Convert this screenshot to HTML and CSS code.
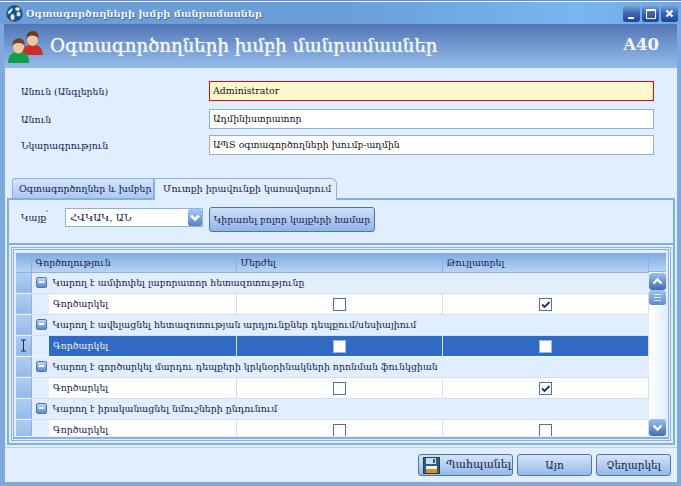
FILE: index.html
```html
<!DOCTYPE html>
<html lang="hy">

<head>
    <meta charset="UTF-8">
    <title>Օգտագործողների խմբի մանրամասներ</title>
    <link rel="stylesheet" href="styles.css">
</head>

<body>
    <div class="window">
        <div class="titlebar">
            <svg class="logo" width="17" height="17" viewBox="0 0 17 17">
                <circle cx="8.5" cy="8.5" r="8.2" fill="#1c4f8c"/>
                <path d="M1.5 8 C3 5 5 4 6.5 3 C7 5 5 8 3 9 Z" fill="#dff0fb"/>
                <ellipse cx="11.5" cy="4" rx="2.4" ry="1.7" fill="#f2f8fd"/>
                <ellipse cx="12.5" cy="9" rx="2" ry="2.6" fill="#cfe6f7"/>
                <ellipse cx="6.5" cy="12" rx="2" ry="3" fill="#f2f8fd"/>
            </svg>
            <span class="title-text">Օգտագործողների խմբի մանրամասներ</span>
            <div class="win-btns">
                <div class="win-btn"><svg width="17" height="17" viewBox="0 0 17 17"><rect x="5" y="12" width="6" height="2" fill="#fff"/></svg></div>
                <div class="win-btn"><svg width="17" height="17" viewBox="0 0 17 17"><path d="M4.5 4.5h9v9h-9z M4.5 5.5h9" fill="none" stroke="#fff"/></svg></div>
                <div class="win-btn"><svg width="17" height="17" viewBox="0 0 17 17"><path d="M5.5 5.5l6 6M11.5 5.5l-6 6" stroke="#fff" stroke-width="2.2"/></svg></div>
            </div>
        </div>

        <div class="header">
            <svg class="users" width="36" height="34" viewBox="0 0 36 34">
                <path d="M14 25 C14 17 18 15 24 15 C31 15 34 17 35 25 Z" fill="#c9302a"/>
                <ellipse cx="24.5" cy="9.5" rx="5.5" ry="6.5" fill="#f4c5a0"/>
                <path d="M18.5 9 C18 3 22 1 25 1 C29 1 31 4 30.5 9 C29 6 27 5.5 24 5.5 C21 5.5 20 7 18.5 9 Z" fill="#6b3a22"/>
                <path d="M0 33 C0 25 4 22 11 22 C18 22 21 25 21 33 Z" fill="#10a04a"/>
                <ellipse cx="10.5" cy="17" rx="5.5" ry="6.5" fill="#f4c5a0"/>
                <path d="M4.5 16 C4 10 8 8.500 11 8.500 C15 8.500 17 11 16.500 16 C15 13 13 13 10 13 C7 13 6 14 4.500 16 Z" fill="#6b4526"/>
            </svg>
            <span class="header-text">Օգտագործողների խմբի մանրամասներ</span>
            <span class="header-code">A40</span>
        </div>

        <div class="content">
            <div class="form">
                <div class="form-row">
                    <span class="form-label">Անուն (Անգլերեն)</span>
                    <div class="field field-required">Administrator</div>
                </div>
                <div class="form-row row-second">
                    <span class="form-label">Անուն</span>
                    <div class="field">Ադմինիստրատոր</div>
                </div>
                <div class="form-row row-third">
                    <span class="form-label">Նկարագրություն</span>
                    <div class="field">ԱՊՏ օգտագործողների խումբ-ադմին</div>
                </div>
            </div>

            <div class="tabs">
                <div class="tab">Օգտագործողներ և խմբեր</div>
                <div class="tab tab-active">Մուտքի իրավունքի կառավարում</div>
            </div>

            <div class="panel">
                <div class="toolbar">
                    <span class="site-label">Կայք<sup>՛</sup></span>
                    <div class="combo">
                        <span>ՀՎԿԱԿ, ԱՆ</span>
                        <div class="combo-btn"><svg width="14" height="17" viewBox="0 0 14 17"><path d="M3 6.500l4 4 4-4" fill="none" stroke="#fff" stroke-width="2.600"/></svg></div>
                    </div>
                    <div class="apply-btn">Կիրառել բոլոր կայքերի համար</div>
                </div>

                <div class="grid-area">
                    <div class="frame-outer">
                        <div class="frame-inner">
                            <div class="grid">
                                <table class="rights">
                                    <colgroup>
                                        <col class="col-head">
                                        <col class="col-indent">
                                        <col class="col-action">
                                        <col class="col-deny">
                                        <col class="col-allow">
                                    </colgroup>
                                    <tr class="head-row">
                                        <td class="row-head"></td>
                                        <td colspan="2">Գործողություն</td>
                                        <td>Մերժել</td>
                                        <td>Թույլատրել</td>
                                    </tr>
                                    <tr class="group-row">
                                        <td class="row-head"></td>
                                        <td colspan="4"><span class="collapse"></span>Կարող է ամփոփել լաբորատոր հետազոտությունը</td>
                                    </tr>
                                    <tr class="data-row">
                                        <td class="row-head"></td>
                                        <td class="indent"></td>
                                        <td>Գործարկել</td>
                                        <td class="check-cell"><span class="check"></span></td>
                                        <td class="check-cell"><span class="check"><svg width="11" height="11" viewBox="0 0 11 11"><path d="M2 5.500l2.500 2.500 5-5" fill="none" stroke="#1c2f6b" stroke-width="1.800"/></svg></span></td>
                                    </tr>
                                    <tr class="group-row">
                                        <td class="row-head"></td>
                                        <td colspan="4"><span class="collapse"></span>Կարող է ավելացնել հետազոտության արդյունքներ դեպքում/սեսիայիում</td>
                                    </tr>
                                    <tr class="data-row selected">
                                        <td class="row-head"><svg width="9" height="13" viewBox="0 0 9 13"><path d="M2 1h5M2 12h5M4.500 1v11" fill="none" stroke="#1c2f6b"/></svg></td>
                                        <td class="indent"></td>
                                        <td>Գործարկել</td>
                                        <td class="check-cell"><span class="check"></span></td>
                                        <td class="check-cell"><span class="check"></span></td>
                                    </tr>
                                    <tr class="group-row">
                                        <td class="row-head"></td>
                                        <td colspan="4"><span class="collapse"></span>Կարող է գործարկել մարդու դեպքերի կրկնօրինակների որոնման ֆունկցիան</td>
                                    </tr>
                                    <tr class="data-row">
                                        <td class="row-head"></td>
                                        <td class="indent"></td>
                                        <td>Գործարկել</td>
                                        <td class="check-cell"><span class="check"></span></td>
                                        <td class="check-cell"><span class="check"><svg width="11" height="11" viewBox="0 0 11 11"><path d="M2 5.500l2.500 2.500 5-5" fill="none" stroke="#1c2f6b" stroke-width="1.800"/></svg></span></td>
                                    </tr>
                                    <tr class="group-row">
                                        <td class="row-head"></td>
                                        <td colspan="4"><span class="collapse"></span>Կարող է իրականացնել նմուշների ընդունում</td>
                                    </tr>
                                    <tr class="data-row">
                                        <td class="row-head"></td>
                                        <td class="indent"></td>
                                        <td>Գործարկել</td>
                                        <td class="check-cell"><span class="check"></span></td>
                                        <td class="check-cell"><span class="check"></span></td>
                                    </tr>
                                </table>

                                <div class="scrollbar">
                                    <div class="scroll-head"></div>
                                    <div class="scroll-track">
                                        <div class="scroll-btn"><svg width="17" height="17" viewBox="0 0 17 17"><path d="M4.500 10.500l4-4 4 4" fill="none" stroke="#fff" stroke-width="2.400"/></svg></div>
                                        <div class="scroll-thumb"><svg width="17" height="15" viewBox="0 0 17 15"><path d="M5 4.500h7M5 7.500h7M5 10.500h7" stroke="#dbe8f8"/></svg></div>
                                        <div class="scroll-fill"></div>
                                        <div class="scroll-btn scroll-down"><svg width="17" height="17" viewBox="0 0 17 17"><path d="M4.500 6.500l4 4 4-4" fill="none" stroke="#fff" stroke-width="2.400"/></svg></div>
                                    </div>
                                </div>
                            </div>
                        </div>
                    </div>
                </div>
            </div>

            <div class="footer">
                <div class="btn btn-save">
                    <svg width="17" height="17" viewBox="0 0 17 17">
                        <rect x="0.500" y="0.500" width="16" height="16" fill="#2d5f78" stroke="#1d4258"/>
                        <rect x="3" y="1" width="10" height="6" fill="#cfe0ea"/>
                        <rect x="10" y="2" width="2" height="4" fill="#2d5f78"/>
                        <rect x="3" y="9" width="11" height="3" fill="#f4f4f0"/>
                        <rect x="3" y="12" width="11" height="4" fill="#f08a10"/>
                    </svg>
                    <span>Պահպանել</span>
                </div>
                <div class="btn btn-yes">Այո</div>
                <div class="btn btn-no">Չեղարկել</div>
            </div>
        </div>
    </div>
</body>

</html>
```

FILE: styles.css
```css
* {
    box-sizing: border-box;
}

body {
    margin: 0;
    background-color: #7fa8dc;
    font-family: "DejaVu Serif", "Liberation Serif", serif;
    font-size: 9.400px;
    color: #14204f;
}

.window {
    width: 681px;
    height: 486px;
    display: flex;
    flex-direction: column;
    background-color: #7fa8dc;
    overflow: hidden;
}

.titlebar {
    height: 24px;
    flex: none;
    display: flex;
    align-items: center;
    padding: 2px 3px 0 6px;
    border-top: 1px solid #5d8fd0;
    box-shadow: inset 0 1px 0 #f4f9fe;
    background: linear-gradient(to right, #6d9dd6, #6a9ed8 50%, #78b6f3 85%, #6fa8e6);
}

.logo {
    flex: none;
}

.title-text {
    margin-left: 3px;
    font-size: 9.900px;
    font-weight: bold;
    color: #f2f7fd;
    text-shadow: 1px 1px 1px #3c659f;
}

.win-btns {
    margin-left: auto;
    display: flex;
    gap: 2px;
}

.win-btn {
    width: 17px;
    height: 17px;
    border-radius: 3px;
    background: linear-gradient(#7fa9de, #3c69b4 45%, #1d4596);
}

.win-btn svg {
    display: block;
}

.header {
    height: 44px;
    flex: none;
    margin: 0 4px;
    display: flex;
    align-items: center;
    padding-right: 18px;
    background: linear-gradient(#5375b5, #92bceb);
    border-bottom: 1px solid #8db4e6;
}

.users {
    flex: none;
    margin: 2px 0 0 4px;
}

.header-text {
    margin-left: 6px;
    font-size: 18.200px;
    color: #f3f8fe;
    text-shadow: 0 0 1px #f3f8fe;
}

.header-code {
    margin-left: auto;
    margin-bottom: 2px;
    font-size: 16.500px;
    font-weight: bold;
    color: #f3f8fe;
}

.content {
    flex: 1;
    margin: 0 4px 4px 5px;
    background-color: #e0eefd;
    display: flex;
    flex-direction: column;
}

.form {
    padding: 13px 23px 0 16px;
}

.form-row {
    display: flex;
    align-items: center;
}

.row-second {
    margin-top: 8px;
}

.row-third {
    margin-top: 6px;
}

.form-label {
    width: 188px;
}

.field {
    width: 445px;
    height: 20px;
    line-height: 18px;
    padding-left: 3px;
    background-color: #fff;
    border: 1px solid #8cb0e4;
    color: #111;
}

.field-required {
    background-color: #fff8cc;
    border-color: #e8000c;
}

.tabs {
    display: flex;
    margin: 23px 0 0 7px;
    position: relative;
    z-index: 1;
    height: 22px;
}

.tab {
    width: 142px;
    height: 20px;
    line-height: 19px;
    padding-left: 6px;
    white-space: nowrap;
    background: linear-gradient(#d4e6fa, #a9caf0);
    border: 1px solid #8cb0e4;
    border-bottom: none;
    border-radius: 3px 0 0 0;
}

.tab-active {
    width: 183px;
    height: 22px;
    padding-left: 8px;
    background: #e0eefd;
    border-radius: 0 6px 0 0;
}

.panel {
    margin: -2px 2px 0;
    height: 247px;
    border: 2px solid #85ade0;
    flex: none;
}

.toolbar {
    height: 45px;
    display: flex;
    align-items: flex-start;
    padding-top: 7px;
    border-bottom: 2px solid #85ade0;
}

.site-label {
    width: 56px;
    padding: 5px 0 0 12px;
}

.site-label sup {
    font-size: 8px;
    line-height: 0;
}

.combo {
    width: 138px;
    height: 19px;
    margin-top: 1px;
    display: flex;
    justify-content: space-between;
    align-items: center;
    padding-left: 4px;
    font-size: 10px;
    background-color: #fff;
    border: 1px solid #8cb0e4;
}

.combo-btn {
    width: 14px;
    height: 17px;
    border-radius: 2px;
    background: linear-gradient(#a8caf0, #4f82cc);
}

.combo-btn svg {
    display: block;
}

.apply-btn {
    width: 166px;
    height: 25px;
    margin-left: 6px;
    line-height: 23px;
    text-align: center;
    white-space: nowrap;
    border: 1px solid #4a75b8;
    border-radius: 3px;
    background: linear-gradient(#cfe1f7, #8fb4e6);
}

.grid-area {
    padding: 2px;
}

.frame-outer {
    height: 194px;
    padding: 1px;
    border: 1px solid #8cb0e4;
}

.frame-inner {
    height: 100%;
    padding: 3px 2px 1px;
    border: 1px solid #8cb0e4;
    border-bottom-width: 2px;
}

.grid {
    height: 183px;
    display: flex;
    overflow: hidden;
    align-items: flex-start;
}

.rights {
    width: 633px;
    flex: none;
    table-layout: fixed;
    border-collapse: collapse;
}

.col-head {
    width: 15px;
}

.col-indent {
    width: 18px;
}

.col-action {
    width: 187px;
}

.col-deny {
    width: 206px;
}

.rights td {
    padding: 0 0 0 4px;
    white-space: nowrap;
    overflow: hidden;
}

.rights .row-head {
    padding: 0;
    text-align: center;
    background: linear-gradient(#b0cef0, #94b9e8);
    border-right: 1px solid #8cb0e4;
    border-bottom: 1px solid #eaf2fc;
}

.row-head svg {
    display: block;
    margin: auto;
}

.head-row {
    height: 19px;
}

.head-row td,
.rights .head-row .row-head,
.scroll-head {
    background: linear-gradient(#7faae3, #b6d3f3);
    border-right: 1px solid #8cb0e4;
    border-bottom: 1px solid #8cb0e4;
}

.group-row {
    height: 21px;
}

.group-row td {
    padding-left: 4px;
    border-bottom: 1px solid #cfe0f6;
}

.collapse {
    display: inline-block;
    width: 11px;
    height: 11px;
    margin-right: 6px;
    vertical-align: -2px;
    border-radius: 2px;
    border: 1px solid #4a75b8;
    background: linear-gradient(#bcd5f4, #5d8bd0);
    position: relative;
}

.collapse::after {
    content: "";
    position: absolute;
    left: 2px;
    top: 3px;
    width: 5px;
    height: 2px;
    background-color: #fff;
}

.data-row {
    height: 21px;
    background-color: #fff;
}

.data-row td {
    border-right: 1px solid #cfe0f6;
    border-bottom: 1px solid #cfe0f6;
}

.rights .indent {
    background-color: #e0eefd;
    border-right: none;
}

.rights .check-cell {
    padding: 0;
    text-align: center;
}

.check {
    display: inline-block;
    width: 13px;
    height: 13px;
    margin-top: 2px;
    background-color: #fff;
    border: 1px solid #4f6fae;
    vertical-align: top;
}

.check svg {
    display: block;
}

.selected td {
    background-color: #316ac5;
    color: #e8f0fc;
    border-right-color: #cfe0f6;
    border-top: 1px dotted #fff;
    border-bottom: 1px dotted #fff;
}

.selected .check {
    border-color: #9db8e6;
}

.rights .selected .indent {
    background-color: #e0eefd;
}

.scrollbar {
    width: 18px;
    height: 183px;
    flex: none;
    display: flex;
    flex-direction: column;
}

.scroll-head {
    height: 19px;
    flex: none;
    border-right: none;
}

.scroll-track {
    flex: 1;
    padding-top: 1px;
    display: flex;
    flex-direction: column;
    background: linear-gradient(to right, #fff, #e0eefd);
}

.scroll-btn,
.scroll-thumb {
    width: 17px;
    flex: none;
    border-radius: 3px;
    background: linear-gradient(#9cbfec, #3f6dbb);
}

.scroll-btn {
    height: 17px;
}

.scroll-thumb {
    height: 15px;
    background: linear-gradient(#a6c5ee, #5c8acf);
}

.scroll-btn svg,
.scroll-thumb svg {
    display: block;
}

.scroll-fill {
    flex: 1;
}

.footer {
    flex: 1;
    margin-top: 2px;
    display: flex;
    justify-content: flex-end;
    gap: 4px;
    padding: 6px 6px 0 0;
    border-top: 1px solid #b4cff0;
    font-size: 10.500px;
}

.btn {
    height: 22px;
    line-height: 20px;
    text-align: center;
    border: 1px solid #4a75b8;
    border-radius: 3px;
    background: linear-gradient(#d6e5f8, #94b8e8);
}

.btn-save {
    width: 95px;
    display: flex;
    align-items: center;
    padding-left: 4px;
    gap: 6px;
    font-size: 11px;
}

.btn-yes,
.btn-no {
    width: 75px;
}
```
